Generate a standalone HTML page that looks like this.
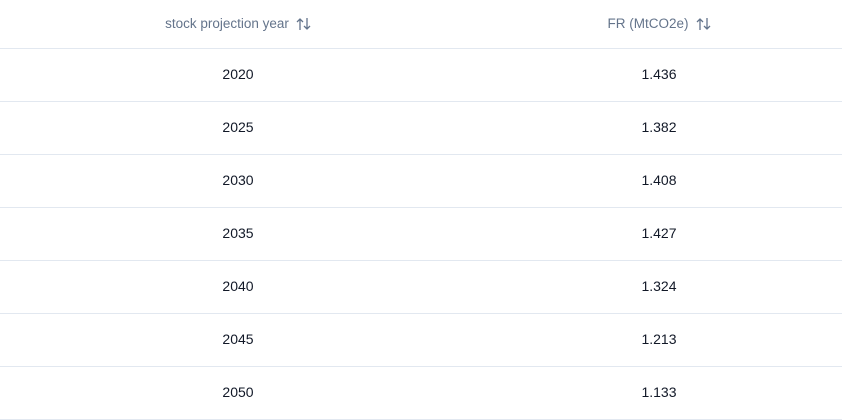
<!DOCTYPE html>
<html><head><style>
body{margin:0;width:842px;height:419px;overflow:hidden;background:#fff;font-family:"Liberation Sans",sans-serif;}
table{border-collapse:collapse;width:842px;table-layout:fixed;}
th{height:47px;padding:0 0 1px 0;font-weight:normal;font-size:13.5px;color:#64748b;border-bottom:1px solid #e2e8f0;text-align:center;}
td{height:50px;padding:0 0 2px 0;font-size:14px;color:#111827;border-bottom:1px solid #e2e8f0;text-align:center;}
svg{vertical-align:-3px;margin-left:7px;}
</style></head><body>
<table>
<colgroup><col style="width:476px"><col style="width:366px"></colgroup>
<tr><th>stock projection year<svg width="15" height="14" viewBox="0 0 15 14" fill="none" stroke="#64748b" stroke-width="1.3"><path d="M4 13V2M1 5l3-3 3 3M11 1v11M8 9l3 3 3-3"/></svg></th>
<th>FR (MtCO2e)<svg width="15" height="14" viewBox="0 0 15 14" fill="none" stroke="#64748b" stroke-width="1.3"><path d="M4 13V2M1 5l3-3 3 3M11 1v11M8 9l3 3 3-3"/></svg></th></tr>
<tr><td>2020</td><td>1.436</td></tr>
<tr><td>2025</td><td>1.382</td></tr>
<tr><td>2030</td><td>1.408</td></tr>
<tr><td>2035</td><td>1.427</td></tr>
<tr><td>2040</td><td>1.324</td></tr>
<tr><td>2045</td><td>1.213</td></tr>
<tr><td>2050</td><td>1.133</td></tr>
</table>
</body></html>
